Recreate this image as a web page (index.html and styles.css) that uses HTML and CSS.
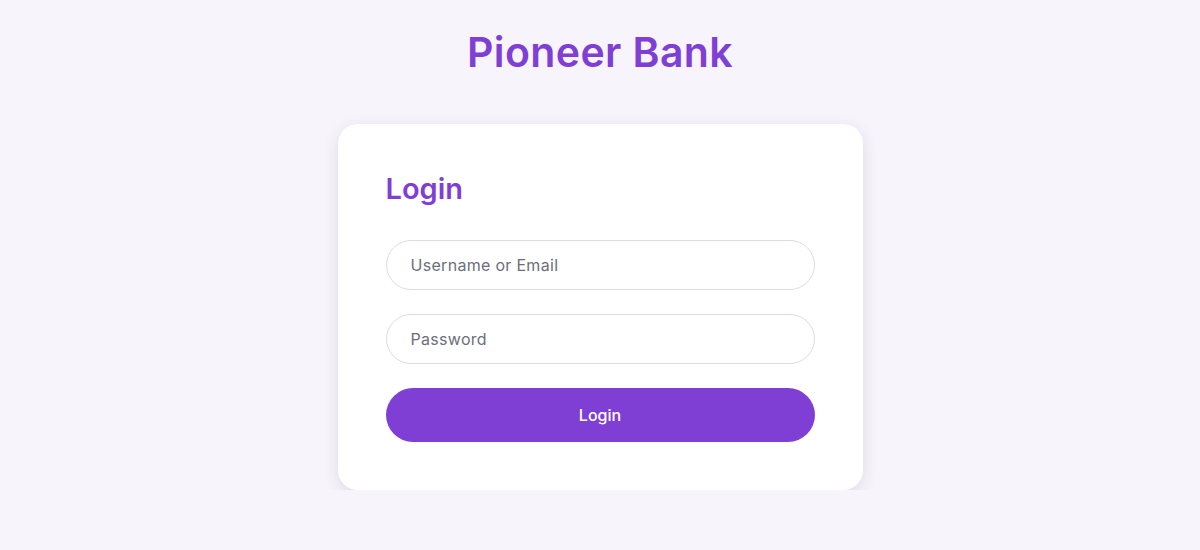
FILE: index.html
```html
<!DOCTYPE html>
<html lang="en">
<head>
<meta charset="utf-8">
<title>Pioneer Bank</title>
<link rel="stylesheet" href="styles.css">
</head>
<body>
  <header class="site-header">
    <h1 class="brand">Pioneer Bank</h1>
  </header>
  <main class="page">
    <form class="login-card">
      <h2 class="login-title">Login</h2>
      <input class="field" type="text" placeholder="Username or Email">
      <input class="field" type="password" placeholder="Password">
      <button class="submit" type="button">Login</button>
    </form>
  </main>
</body>
</html>
```
FILE: styles.css
```css
* { box-sizing: border-box; }
body {
  margin: 0;
  background: #f7f4fb;
  font-family: Inter, "Noto Sans", sans-serif;
  color: #333;
}
.site-header {
  padding-top: 24px;
  text-align: center;
}
.brand {
  margin: 0;
  font-size: 41px;
  line-height: 56px;
  font-weight: 600;
  color: #7f3fd5;
  letter-spacing: 0.4px;
}
.page {
  display: flex;
  justify-content: center;
  padding-top: 44px;
}
.login-card {
  width: 525px;
  padding: 48px;
  background: #fff;
  border-radius: 20px;
  box-shadow: 0 4px 16px rgba(60, 40, 90, 0.12);
  display: flex;
  flex-direction: column;
}
.login-title {
  margin: 0 0 34px;
  font-size: 29px;
  line-height: 34px;
  font-weight: 600;
  color: #7f3fd5;
}
.field {
  height: 50px;
  margin: 0 0 24px;
  padding: 0 24px;
  border: 1px solid #ddd;
  border-radius: 25px;
  font-family: inherit;
  font-size: 16px;
  letter-spacing: 0.3px;
  color: #333;
  background: #fff;
  outline: none;
}
.field::placeholder { color: #6b6f7a; }
.submit {
  height: 54px;
  border: none;
  border-radius: 27px;
  background: #7f3fd5;
  color: #fff;
  font-family: inherit;
  font-size: 16px;
  font-weight: 500;
  cursor: pointer;
}
```
